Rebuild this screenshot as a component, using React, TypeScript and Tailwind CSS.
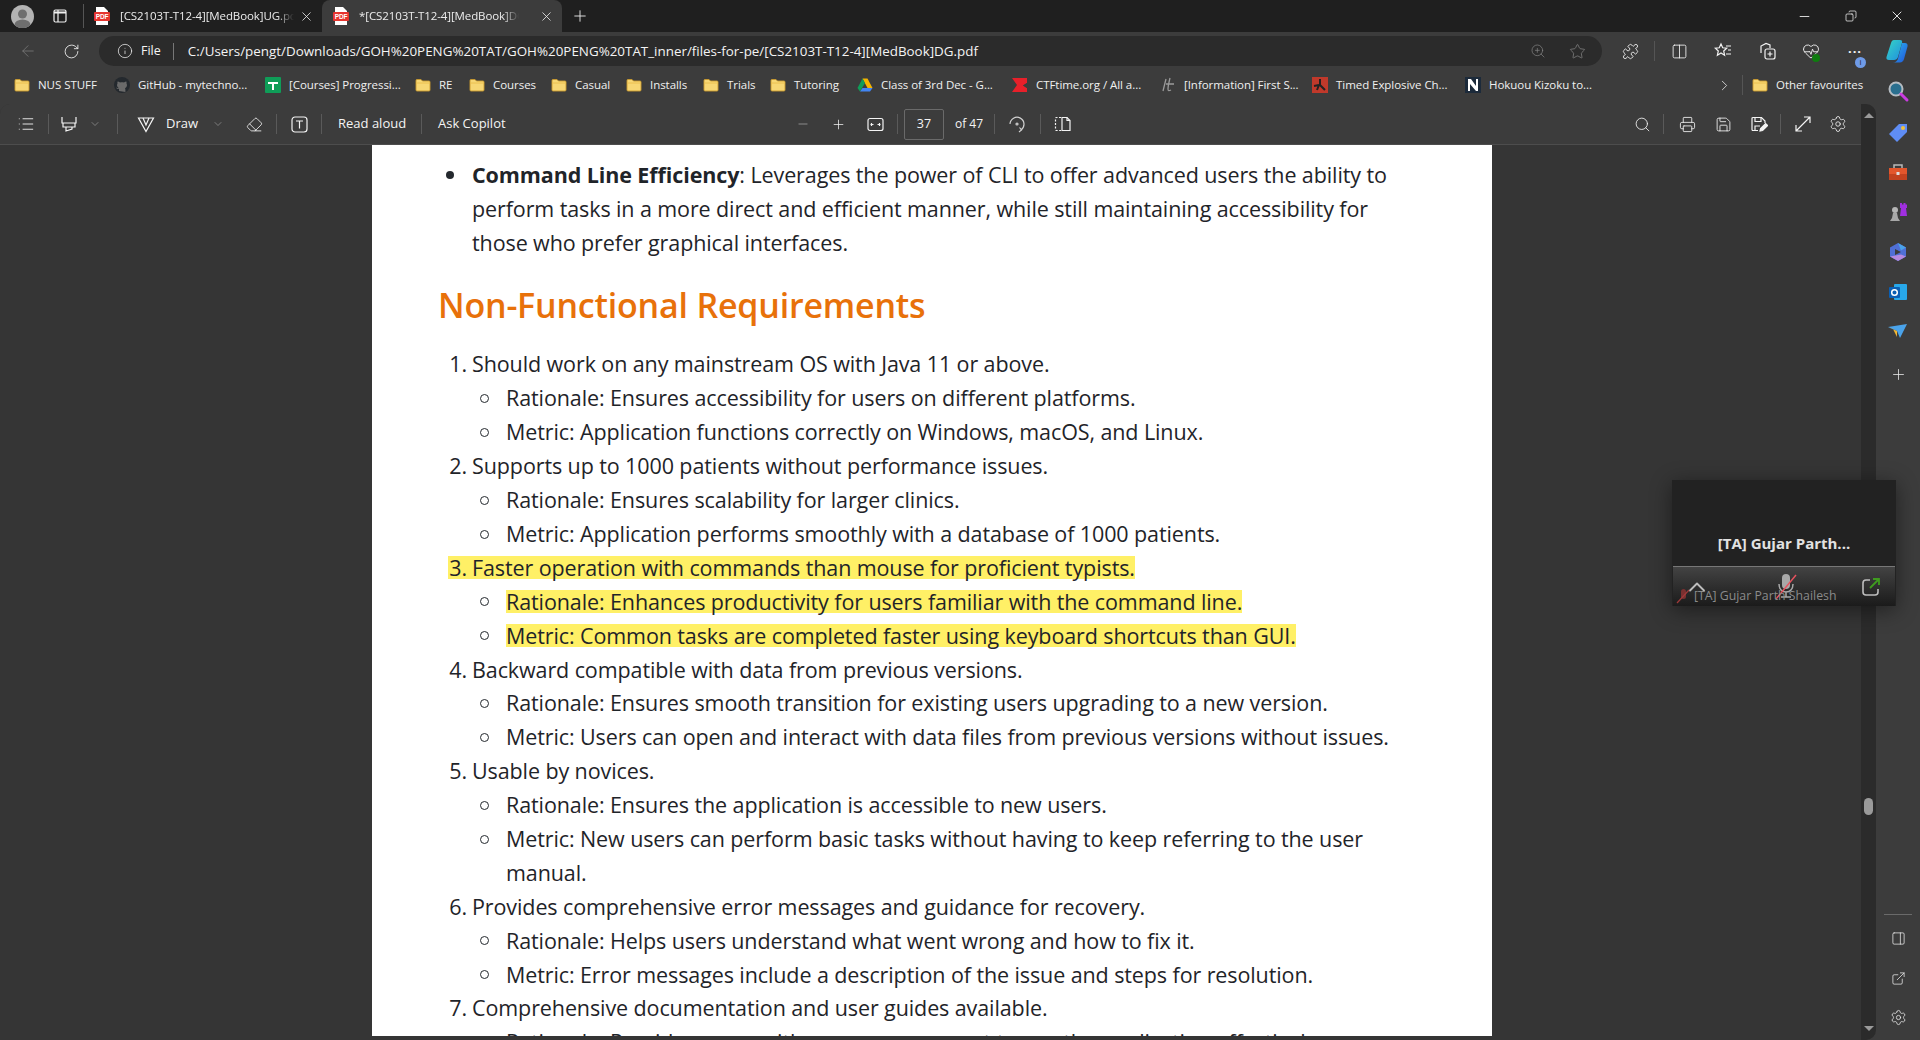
import React from "react";
import {
  ArrowLeft, RotateCw, Info, ZoomIn, Star, Puzzle, Columns2, HeartPulse, X, Plus, Minus, List, ChevronDown, ChevronRight,
  Eraser, Search, Printer, Save, Settings, Copy, ExternalLink, PanelRight, ChevronUp,
} from "lucide-react";

function Folder() {
  return (
    <svg width="16" height="16" viewBox="0 0 16 16" className="shrink-0">
      <path d="M1 3.5A1 1 0 0 1 2 2.5h4l1.5 1.5H14a1 1 0 0 1 1 1v8a1 1 0 0 1-1 1H2a1 1 0 0 1-1-1z" fill="#f7d774" stroke="#c99a2e" strokeWidth="0.9" />
      <path d="M1 6h14" stroke="#e9bd4c" strokeWidth="0.9" />
    </svg>
  );
}

function PdfIcon() {
  return (
    <svg width="16" height="18" viewBox="0 0 16 18" className="shrink-0">
      <path d="M2 0h8l4 4v14H2z" fill="#fff" />
      <rect x="0" y="5" width="16" height="9" rx="1" fill="#e6342e" />
      <text x="8" y="12" textAnchor="middle" fontSize="6.5" fontWeight="700" fontFamily="Liberation Sans" fill="#fff">PDF</text>
    </svg>
  );
}

function TabBar() {
  return (
    <div className="flex h-8 shrink-0 items-center bg-[#1f1f1f] text-[11.5px] tracking-[-0.1px] text-[#ececec]">
      <div className="ml-[11px] flex h-[23px] w-[23px] items-end justify-center overflow-hidden rounded-full bg-[#b3b3b3]">
        <svg width="23" height="23" viewBox="0 0 23 23"><circle cx="11.5" cy="9" r="4.5" fill="#6e6e6e" /><ellipse cx="11.5" cy="20" rx="8" ry="5.5" fill="#6e6e6e" /></svg>
      </div>
      <div className="ml-[19px] flex w-[14px] justify-center">
        <svg width="14" height="14" viewBox="0 0 14 14" fill="none" stroke="#f0f0f0" strokeWidth="1.2"><rect x="1" y="1" width="12" height="12" rx="1.5" /><path d="M5 1v12" /><path d="M1 3.5h12" strokeWidth="2" /></svg>
      </div>
      <div className="ml-[16px] h-[24px] w-px bg-[#555]" />
      <div className="ml-[10px] flex items-center">
        <PdfIcon />
        <span className="ml-[10px] w-[174px] overflow-hidden whitespace-nowrap [mask-image:linear-gradient(to_right,black_90%,transparent)]">[CS2103T-T12-4][MedBook]UG.pdf</span>
        <X size={15} strokeWidth={1.3} className="ml-[5px]" />
      </div>
      <div className="ml-[8px] flex h-8 w-[240px] items-center rounded-t-[8px] bg-[#3c3c3c] pl-[11px]">
        <PdfIcon />
        <span className="ml-[10px] w-[160px] overflow-hidden whitespace-nowrap [mask-image:linear-gradient(to_right,black_90%,transparent)]">*[CS2103T-T12-4][MedBook]DG.pdf</span>
        <X size={15} strokeWidth={1.3} className="ml-[20px]" />
      </div>
      <Plus size={18} strokeWidth={1.2} className="ml-[9px]" />
      <div className="ml-auto flex items-center text-white">
        <Minus size={15} strokeWidth={1.3} />
        <Copy size={12} strokeWidth={1.4} className="ml-[33px] -scale-x-100" />
        <X size={16} strokeWidth={1.3} className="ml-[32px] mr-[15px]" />
      </div>
    </div>
  );
}

function Copilot() {
  return (
    <svg width="24" height="24" viewBox="0 0 24 24">
      <defs>
        <linearGradient id="cpa" x1="0" y1="0" x2="1" y2="1"><stop offset="0" stopColor="#36d6c4" /><stop offset="1" stopColor="#1f8fe0" /></linearGradient>
        <linearGradient id="cpb" x1="0" y1="0" x2="1" y2="1"><stop offset="0" stopColor="#2ab7f0" /><stop offset="1" stopColor="#2253d8" /></linearGradient>
      </defs>
      <path d="M9 1h6c2 0 2.5 1 2 3L13 18c-.6 2-2 3-4 3H4c-2 0-3-1-2.5-3L6 4c.6-2 1.5-3 3-3z" fill="url(#cpa)" />
      <path d="M17 4h3c2 0 3 1.5 2.5 3.5L19 20c-.6 2-2 3.5-4 3.5H8c3 0 4.5-2 5-4z" fill="url(#cpb)" />
    </svg>
  );
}

function AddressBar() {
  return (
    <div className="flex h-[34px] shrink-0 items-center bg-[#3c3c3c] pt-[4px] text-[#f4f4f4]">
      <ArrowLeft size={18} strokeWidth={1} className="ml-[19px] text-[#7d7d7d]" />
      <RotateCw size={17} strokeWidth={1.2} className="ml-[26px]" />
      <div className="ml-[19px] flex h-[30px] w-[1503px] items-center rounded-full bg-[#2b2b2b] text-[13.4px]">
        <Info size={16} strokeWidth={1.1} className="ml-[18px]" />
        <span className="ml-[8px] text-[12.5px]">File</span>
        <div className="ml-[12px] h-[17px] w-px bg-[#777]" />
        <span className="ml-[14px] w-[800px] whitespace-nowrap">C:/Users/pengt/Downloads/GOH%20PENG%20TAT/GOH%20PENG%20TAT_inner/files-for-pe/[CS2103T-T12-4][MedBook]DG.pdf</span>
        <ZoomIn size={16} strokeWidth={1} className="ml-auto text-[#8a8a8a]" />
        <Star size={17} strokeWidth={1} className="ml-[23px] mr-[16px] text-[#8a8a8a]" />
      </div>
      <Puzzle size={17} strokeWidth={1.2} className="ml-[20px]" />
      <div className="ml-[15px] h-[20px] w-px bg-[#555]" />
      <Columns2 size={17} strokeWidth={1.2} className="ml-[16px]" />
      <svg width="18" height="18" viewBox="0 0 18 18" fill="none" stroke="#f4f4f4" strokeWidth="1.2" className="ml-[26px]"><path d="M7 2l1.7 3.8 4 .4-3 2.8.9 4.2L7 11l-3.6 2.2.9-4.2-3-2.8 4-.4z" /><path d="M12 4h5M14 8h3M12 12h5" /></svg>
      <svg width="18" height="18" viewBox="0 0 18 18" fill="none" stroke="#f4f4f4" strokeWidth="1.2" className="ml-[26px]"><path d="M3 11V4l5-2.5L12 3v3" /><rect x="7" y="7" width="10" height="10" rx="2" /><path d="M12 9.5v5M9.5 12h5" /></svg>
      <div className="relative ml-[26px]">
        <HeartPulse size={18} strokeWidth={1.2} />
        <span className="absolute -bottom-[2px] right-0 h-[8px] w-[8px] rounded-full bg-[#0f7b0f]" />
      </div>
      <div className="relative ml-[26px] w-[18px] text-center text-[13px] font-bold leading-none">
        <span className="tracking-[1px]">···</span>
        <span className="absolute -bottom-[10px] left-[9px] flex h-[11px] w-[11px] items-center justify-center rounded-full bg-[#6f9be8] text-[8px] font-normal text-[#1f1f1f]">i</span>
      </div>
      <div className="ml-[21px]"><Copilot /></div>
    </div>
  );
}

const marks = [
  { name: "NUS STUFF", w: "w-[59px]", icon: <Folder /> },
  {
    name: "GitHub - mytechno...", w: "w-[110px]", icon: (
      <svg width="16" height="16" viewBox="0 0 16 16" className="shrink-0"><circle cx="8" cy="8" r="8" fill="#24292e" /><path d="M5 14v-2c-2 .4-2.5-1-3-1.600 1 0 1.500 1 3 .8-2-1-2.500-3-1.500-4.700-.2-1 0-1.700.2-2 .8 0 1.500.4 2.300 1 1.300-.4 2.700-.4 4 0 .8-.6 1.500-1 2.300-1 .2.300.4 1 .2 2 1 1.700.5 3.700-1.500 4.700.3.500.4 1 .4 1.800v2z" fill="#6a6a6a" /></svg>
    ),
  },
  {
    name: "[Courses] Progressi...", w: "w-[109px]", icon: (
      <svg width="16" height="16" viewBox="0 0 16 16" className="shrink-0"><rect width="16" height="16" rx="1" fill="#0f9d58" /><path d="M3 5h10v2H9v6H7V7H3z" fill="#fff" /></svg>
    ),
  },
  { name: "RE", w: "w-[13px]", icon: <Folder /> },
  { name: "Courses", w: "w-[41px]", icon: <Folder /> },
  { name: "Casual", w: "w-[34px]", icon: <Folder /> },
  { name: "Installs", w: "w-[36px]", icon: <Folder /> },
  { name: "Trials", w: "w-[26px]", icon: <Folder /> },
  { name: "Tutoring", w: "w-[46px]", icon: <Folder /> },
  {
    name: "Class of 3rd Dec - G...", w: "w-[114px]", icon: (
      <svg width="16" height="16" viewBox="0 0 16 16" className="shrink-0"><path d="M5.500 1.500h5L15.500 11h-5z" fill="#f4b400" /><path d="M5.500 1.500L.5 11l2.500 3.500L8 6z" fill="#0f9d58" /><path d="M3 14.500h10l2.500-3.500H5.500z" fill="#4285f4" /></svg>
    ),
  },
  {
    name: "CTFtime.org / All a...", w: "w-[107px]", icon: (
      <svg width="16" height="16" viewBox="0 0 16 16" className="shrink-0"><path d="M0 1h15v5l-4 2.500 4 2.500v4H0l5-7z" fill="#e8202a" /><path d="M15 6L11 8.500l4 2.500z" fill="#3c3c3c" /></svg>
    ),
  },
  {
    name: "[Information] First S...", w: "w-[111px]", icon: (
      <svg width="16" height="16" viewBox="0 0 16 16" fill="none" stroke="#9a9a9a" strokeWidth="1.300" className="shrink-0"><path d="M6 2C5 6 4 10 3 14M10 1c-1 4-2 8-2 11 0 2 1 2 3 1M6 7h8" /></svg>
    ),
  },
  {
    name: "Timed Explosive Ch...", w: "w-[112px]", icon: (
      <svg width="16" height="16" viewBox="0 0 16 16" className="shrink-0"><rect width="16" height="16" fill="#c0392b" /><path d="M2 9l5-1M8 2v6l5 5M7 8l-2 5" stroke="#222" strokeWidth="2" fill="none" /></svg>
    ),
  },
  {
    name: "Hokuou Kizoku to...", w: "w-[104px]", icon: (
      <svg width="16" height="16" viewBox="0 0 16 16" className="shrink-0"><rect width="16" height="16" fill="#1c2a3a" /><path d="M3 2h3l5 7V2h2v12h-2L5 7v7H3z" fill="#fff" /></svg>
    ),
  },
];

function Bookmarks() {
  return (
    <div className="flex h-[38px] shrink-0 items-center bg-[#3c3c3c] pl-[14px] text-[11.5px] text-[#f0f0f0]">
      {marks.map((m) => (
        <div key={m.name} className="mr-[17px] flex items-center">
          {m.icon}
          <span className={`ml-[8px] whitespace-nowrap tracking-[-0.05px] ${m.w}`}>{m.name}</span>
        </div>
      ))}
      <ChevronRight size={17} strokeWidth={1.1} className="ml-auto" />
      <div className="ml-[9px] h-[20px] w-px bg-[#555]" />
      <div className="ml-[9px] mr-[58px] flex items-center">
        <Folder />
        <span className="ml-[8px] w-[86px] whitespace-nowrap tracking-[-0.05px]">Other favourites</span>
      </div>
    </div>
  );
}

const Sep = ({ cls }: { cls: string }) => <div className={`h-[20px] w-px shrink-0 bg-[#5a5a5a] ${cls}`} />;

function Toolbar() {
  const box = "flex w-[24px] shrink-0 justify-center";
  return (
    <div className="flex h-[41px] shrink-0 items-center border-b border-[#4d4d4d] bg-[#3c3c3c] text-[13px] text-[#f4f4f4]">
      <div className="ml-[12px] flex w-[28px] justify-center"><List size={18} strokeWidth={1.2} /></div>
      <Sep cls="ml-[8px]" />
      <div className="ml-[6px] flex w-[28px] justify-center">
        <svg width="18" height="18" viewBox="0 0 18 18" fill="none" stroke="#f4f4f4" strokeWidth="1.2"><path d="M2 2v6h14V2M3 8v4h12V8M6 12v4l6-2v-2" /></svg>
      </div>
      <div className="ml-[4px] flex w-[16px] justify-center"><ChevronDown size={12} strokeWidth={1} className="text-[#bbb]" /></div>
      <Sep cls="ml-[14px]" />
      <div className={`ml-[16px] ${box}`}>
        <svg width="18" height="18" viewBox="0 0 18 18" fill="none" stroke="#f4f4f4" strokeWidth="1.2"><path d="M1.500 3h15L9 16.500z" /><path d="M6 3l3 7 3-7" /></svg>
      </div>
      <span className="ml-[8px] w-[32px]">Draw</span>
      <div className="ml-[12px] flex w-[16px] justify-center"><ChevronDown size={12} strokeWidth={1} className="text-[#bbb]" /></div>
      <div className={`ml-[16px] ${box}`}><Eraser size={17} strokeWidth={1.2} /></div>
      <Sep cls="ml-[10px]" />
      <div className={`ml-[10px] ${box}`}>
        <svg width="17" height="17" viewBox="0 0 17 17" fill="none" stroke="#f4f4f4" strokeWidth="1.2"><rect x="1" y="1" width="15" height="15" rx="3" /><path d="M5 5h7M8.500 5v7.500" /></svg>
      </div>
      <Sep cls="ml-[10px]" />
      <span className="ml-[16px] w-[69px] whitespace-nowrap">Read aloud</span>
      <Sep cls="ml-[14px]" />
      <span className="ml-[16px] w-[71px] whitespace-nowrap">Ask Copilot</span>

      <div className={`ml-[282px] ${box}`}><Minus size={14} strokeWidth={1.3} className="text-[#a5a5a5]" /></div>
      <div className={`ml-[11px] ${box}`}><Plus size={15} strokeWidth={1.2} /></div>
      <div className={`ml-[13px] ${box}`}>
        <svg width="17" height="15" viewBox="0 0 17 15" fill="none" stroke="#f4f4f4" strokeWidth="1.2"><rect x="1" y="1.500" width="15" height="12" rx="2" /><path d="M3.500 7.500h3M13.500 7.500h-3" /><path d="M4.500 6v3M12.500 6v3" /></svg>
      </div>
      <Sep cls="ml-[10px]" />
      <div className="ml-[6px] flex h-[31px] w-[40px] shrink-0 items-center justify-center rounded-[2px] border border-[#6a6a6a] bg-[#3c3c3c] text-[12.5px]">37</div>
      <span className="ml-[11px] w-[26px] whitespace-nowrap text-[12px]">of 47</span>
      <Sep cls="ml-[13px]" />
      <div className={`ml-[10px] ${box}`}>
        <svg width="18" height="18" viewBox="0 0 18 18" fill="none" stroke="#d0d0d0" strokeWidth="1.200"><path d="M2 9a7 7 0 1 1 11 6" /><path d="M11 17l2.500-2-2-2.500" /><circle cx="9" cy="9" r="1" /></svg>
      </div>
      <Sep cls="ml-[11px]" />
      <div className={`ml-[9px] ${box}`}>
        <svg width="17" height="17" viewBox="0 0 17 17" fill="none" stroke="#f4f4f4" strokeWidth="1.200"><path d="M7 1.500H2.500a1 1 0 0 0-1 1v11a1 1 0 0 0 1 1H7" strokeDasharray="2 1.500" /><path d="M8 1.500h5l3 3v10H8z" /><path d="M13 1.500v3h3" /></svg>
      </div>

      <div className={`ml-auto ${box}`}><Search size={17} strokeWidth={1.2} /></div>
      <Sep cls="ml-[9px]" />
      <div className={`ml-[11px] ${box}`}><Printer size={17} strokeWidth={1.2} /></div>
      <div className={`ml-[12px] ${box}`}><Save size={17} strokeWidth={1.2} /></div>
      <div className={`ml-[12px] ${box}`}>
        <svg width="18" height="18" viewBox="0 0 18 18" fill="none" stroke="#f4f4f4" strokeWidth="1.200"><path d="M8 15.500H3a1 1 0 0 1-1-1v-11a1 1 0 0 1 1-1h8.500l3.500 3.500v2" /><path d="M5 2.500v4h6v-4M5 15v-4h5" /><path d="M10 16l.6-2.500 5-5 2 2-5 5z" fill="#f4f4f4" /></svg>
      </div>
      <Sep cls="ml-[9px]" />
      <div className={`ml-[10px] ${box}`}>
        <svg width="18" height="18" viewBox="0 0 18 18" fill="none" stroke="#f4f4f4" strokeWidth="1.200"><path d="M2 16L16 2M10 2h6v6M2 10v6h6" /></svg>
      </div>
      <div className={`ml-[11px] ${box}`}><Settings size={18} strokeWidth={1.1} /></div>
      <div className="w-[11px] shrink-0" />
    </div>
  );
}

const hl = "inline-block h-[23px] bg-[#fff066] leading-[23px]";

function Num({ n, children, mark }: { n: number; children: React.ReactNode; mark?: boolean }) {
  return (
    <div className="flex h-[33.9px] items-center pl-[76px] whitespace-nowrap">
      <span className={`w-[24px] text-right pr-[5px] ${mark ? hl : ""}`}>{n}.</span>
      <span className={mark ? hl : ""}>{children}</span>
    </div>
  );
}

function Sub({ children, mark }: { children: React.ReactNode; mark?: boolean }) {
  return (
    <div className="flex h-[33.9px] items-center pl-[109px] whitespace-nowrap">
      <span className="ml-[-1px] h-[9px] w-[9px] rounded-full border-[1.5px] border-[#24292e]" />
      <span className={`ml-[17px] ${mark ? hl : ""}`}>{children}</span>
    </div>
  );
}

function Page() {
  return (
    <div className="h-[891px] w-[1120px] shrink-0 overflow-hidden bg-white pt-[13px] text-[21.5px] tracking-[-0.1px] text-[#1f2429] [font-family:'Open_Sans',sans-serif]">
      <div className="flex h-[33.9px] items-center pl-[76px] whitespace-nowrap">
        <span className="h-[8px] w-[8px] shrink-0 rounded-full bg-[#24292e] ml-[-2px]" />
        <span className="ml-[18px]"><b>Command Line Efficiency</b>: Leverages the power of CLI to offer advanced users the ability to</span>
      </div>
      <div className="h-[33.9px] pl-[100px] leading-[33.9px] whitespace-nowrap">perform tasks in a more direct and efficient manner, while still maintaining accessibility for</div>
      <div className="h-[33.9px] pl-[100px] leading-[33.9px] whitespace-nowrap">those who prefer graphical interfaces.</div>
      <h2 className="mb-[21px] mt-[23px] pl-[66px] text-[34px] font-semibold leading-[44px] tracking-[-0.2px] text-[#e8710a]">Non-Functional Requirements</h2>
      <Num n={1}>Should work on any mainstream OS with Java 11 or above.</Num>
      <Sub>Rationale: Ensures accessibility for users on different platforms.</Sub>
      <Sub>Metric: Application functions correctly on Windows, macOS, and Linux.</Sub>
      <Num n={2}>Supports up to 1000 patients without performance issues.</Num>
      <Sub>Rationale: Ensures scalability for larger clinics.</Sub>
      <Sub>Metric: Application performs smoothly with a database of 1000 patients.</Sub>
      <Num n={3} mark>Faster operation with commands than mouse for proficient typists.</Num>
      <Sub mark>Rationale: Enhances productivity for users familiar with the command line.</Sub>
      <Sub mark>Metric: Common tasks are completed faster using keyboard shortcuts than GUI.</Sub>
      <Num n={4}>Backward compatible with data from previous versions.</Num>
      <Sub>Rationale: Ensures smooth transition for existing users upgrading to a new version.</Sub>
      <Sub>Metric: Users can open and interact with data files from previous versions without issues.</Sub>
      <Num n={5}>Usable by novices.</Num>
      <Sub>Rationale: Ensures the application is accessible to new users.</Sub>
      <Sub>Metric: New users can perform basic tasks without having to keep referring to the user</Sub>
      <div className="h-[33.9px] pl-[134px] leading-[33.9px]">manual.</div>
      <Num n={6}>Provides comprehensive error messages and guidance for recovery.</Num>
      <Sub>Rationale: Helps users understand what went wrong and how to fix it.</Sub>
      <Sub>Metric: Error messages include a description of the issue and steps for resolution.</Sub>
      <Num n={7}>Comprehensive documentation and user guides available.</Num>
      <Sub>Rationale: Provides users with necessary support to use the application effectively.</Sub>
    </div>
  );
}

function Scrollbar() {
  return (
    <div className="flex w-[15px] shrink-0 flex-col items-center rounded-r-[10px] bg-[#2b2b2b] pb-[9px] pt-[9px]">
      <div className="h-0 w-0 border-x-[5px] border-b-[5px] border-x-transparent border-b-[#9a9a9a]" />
      <div className="mt-[680px] h-[17px] w-[9px] rounded-full bg-[#9a9a9a]" />
      <div className="mt-auto h-0 w-0 border-x-[5px] border-t-[5px] border-x-transparent border-t-[#9a9a9a]" />
    </div>
  );
}

function Sidebar() {
  const item = "mt-[16px] flex h-[24px] w-[24px] items-center justify-center";
  return (
    <div className="flex w-[44px] shrink-0 flex-col items-center bg-[#3c3c3c]">
      <div className="mt-[-25px] flex h-[24px] w-[24px] items-center justify-center">
        <svg width="24" height="24" viewBox="0 0 24 24"><circle cx="10" cy="10" r="6.500" fill="#2a6f8f" stroke="#b5bcc2" strokeWidth="2" /><path d="M15 15l6 6" stroke="#c93ce0" strokeWidth="3" strokeLinecap="round" /></svg>
      </div>
      <div className="mt-[17px] flex h-[24px] w-[24px] items-center justify-center">
        <svg width="22" height="22" viewBox="0 0 22 22"><path d="M2 13L12 3h8v8L10 21z" fill="#5f8df5" /><circle cx="16" cy="7" r="2" fill="#f2c23c" /></svg>
      </div>
      <div className={item}>
        <svg width="20" height="20" viewBox="0 0 20 20"><path d="M6 6V3h8v3" fill="none" stroke="#b9b9b9" strokeWidth="1.500" /><rect x="1" y="6" width="18" height="6" fill="#e2562c" /><rect x="1" y="12" width="18" height="6" fill="#c2421f" /><rect x="8.500" y="10" width="3" height="3" fill="#ddd" /></svg>
      </div>
      <div className={item}>
        <svg width="22" height="22" viewBox="0 0 22 22"><circle cx="8" cy="9" r="3" fill="#b5b5b5" /><path d="M6 12h4l1 5 2 3H3l2-3z" fill="#a8a8a8" /><path d="M13 2h2v1.500h1.500V2h2v1.500H20V2v5h-1l1 8h-7l1-8h-1z" fill="#a02fe0" /></svg>
      </div>
      <div className={item}>
        <svg width="20" height="20" viewBox="0 0 20 20"><path d="M10 1l8 4.500v9L10 19l-8-4.500v-9z" fill="#4f6fd6" /><path d="M10 1l8 4.500-5 3z" fill="#4aa3ea" /><path d="M2 14.500L10 19l8-4.500-5-2z" fill="#b58ae0" /><path d="M7 7l6 3-6 3z" fill="#3c3c3c" /></svg>
      </div>
      <div className={item}>
        <svg width="20" height="20" viewBox="0 0 20 20"><rect x="6" y="2" width="13" height="16" rx="1" fill="#28a8ea" /><rect x="1" y="5" width="11" height="11" rx="1" fill="#0a5fb4" /><circle cx="6.500" cy="10.500" r="2.800" fill="none" stroke="#fff" strokeWidth="1.500" /></svg>
      </div>
      <div className={item}>
        <svg width="20" height="20" viewBox="0 0 20 20"><path d="M0 5l19-3-7 14-3-7z" fill="#4aa3ea" /><path d="M0 5l9 4 0 6-4-8z" fill="#f2b632" /></svg>
      </div>
      <Plus size={17} strokeWidth={1.1} className="mt-[22px] text-[#ededed]" />
      <div className="mt-auto h-px w-[28px] bg-[#6a6a6a]" />
      <PanelRight size={15} strokeWidth={1.2} className="mt-[16px] text-[#ededed]" />
      <ExternalLink size={15} strokeWidth={1.2} className="mt-[25px] text-[#ededed]" />
      <Settings size={17} strokeWidth={1.1} className="mb-[14px] mt-[23px] text-[#ededed]" />
    </div>
  );
}

function VideoWindow() {
  return (
    <div className="absolute left-[1672px] top-[480px] flex h-[126px] w-[224px] flex-col bg-[#222222] shadow-[0_4px_20px_rgba(0,0,0,0.45)] [font-family:'Open_Sans',sans-serif]">
      <div className="flex h-[86px] items-end justify-center pb-[12px] text-[15px] font-bold text-[#e2e2e2]">[TA] Gujar Parth...</div>
      <div className="relative mx-px flex h-[40px] items-center justify-between border-t border-[#777] bg-gradient-to-b from-[#434343] to-[#1b1b1b] pl-[10px] pr-[14px]">
        <ChevronUp size={28} strokeWidth={1.6} className="text-[#bdbdbd]" />
        <div className="relative">
          <svg width="24" height="28" viewBox="0 0 24 28" fill="none"><rect x="8" y="1" width="8" height="15" rx="4" fill="#a8a8a8" /><path d="M5 11c0 5 3 8 7 8s7-3 7-8M12 19v5M7 24h10" stroke="#a8a8a8" strokeWidth="1.500" /><path d="M2 26L22 2" stroke="#e7535f" strokeWidth="1.500" /></svg>
        </div>
        <svg width="20" height="20" viewBox="0 0 20 20" fill="none"><path d="M9 3H5a3 3 0 0 0-3 3v9a3 3 0 0 0 3 3h9a3 3 0 0 0 3-3v-3" stroke="#bdbdbd" strokeWidth="1.600" /><path d="M9 11l9-9M12 2h6v6" stroke="#3f9b1f" strokeWidth="1.800" /></svg>
        <svg width="14" height="16" viewBox="0 0 14 16" fill="none" className="absolute bottom-[2px] left-[3px]"><rect x="5" y="1" width="5" height="10" rx="2.500" fill="#7a3030" /><path d="M1 15L13 2" stroke="#a03a3a" strokeWidth="1.200" /></svg>
        <span className="absolute bottom-[1px] left-[21px] whitespace-nowrap text-[12.3px] text-[#8b8b8b]">[TA] Gujar Parth Shailesh</span>
      </div>
    </div>
  );
}

export default function App() {
  return (
    <div className="relative flex h-[1040px] w-[1920px] flex-col overflow-hidden bg-[#3c3c3c] [font-family:'Open_Sans',sans-serif]">
      <TabBar />
      <AddressBar />
      <Bookmarks />
      <div className="flex min-h-0 flex-1">
        <div className="flex min-w-0 flex-1">
          <div className="flex w-[1861px] shrink-0 flex-col overflow-hidden rounded-tl-[10px] bg-[#353535]">
            <Toolbar />
            <div className="flex flex-1 justify-center overflow-hidden pl-[3px]"><Page /></div>
          </div>
          <Scrollbar />
        </div>
        <Sidebar />
      </div>
      <VideoWindow />
    </div>
  );
}
